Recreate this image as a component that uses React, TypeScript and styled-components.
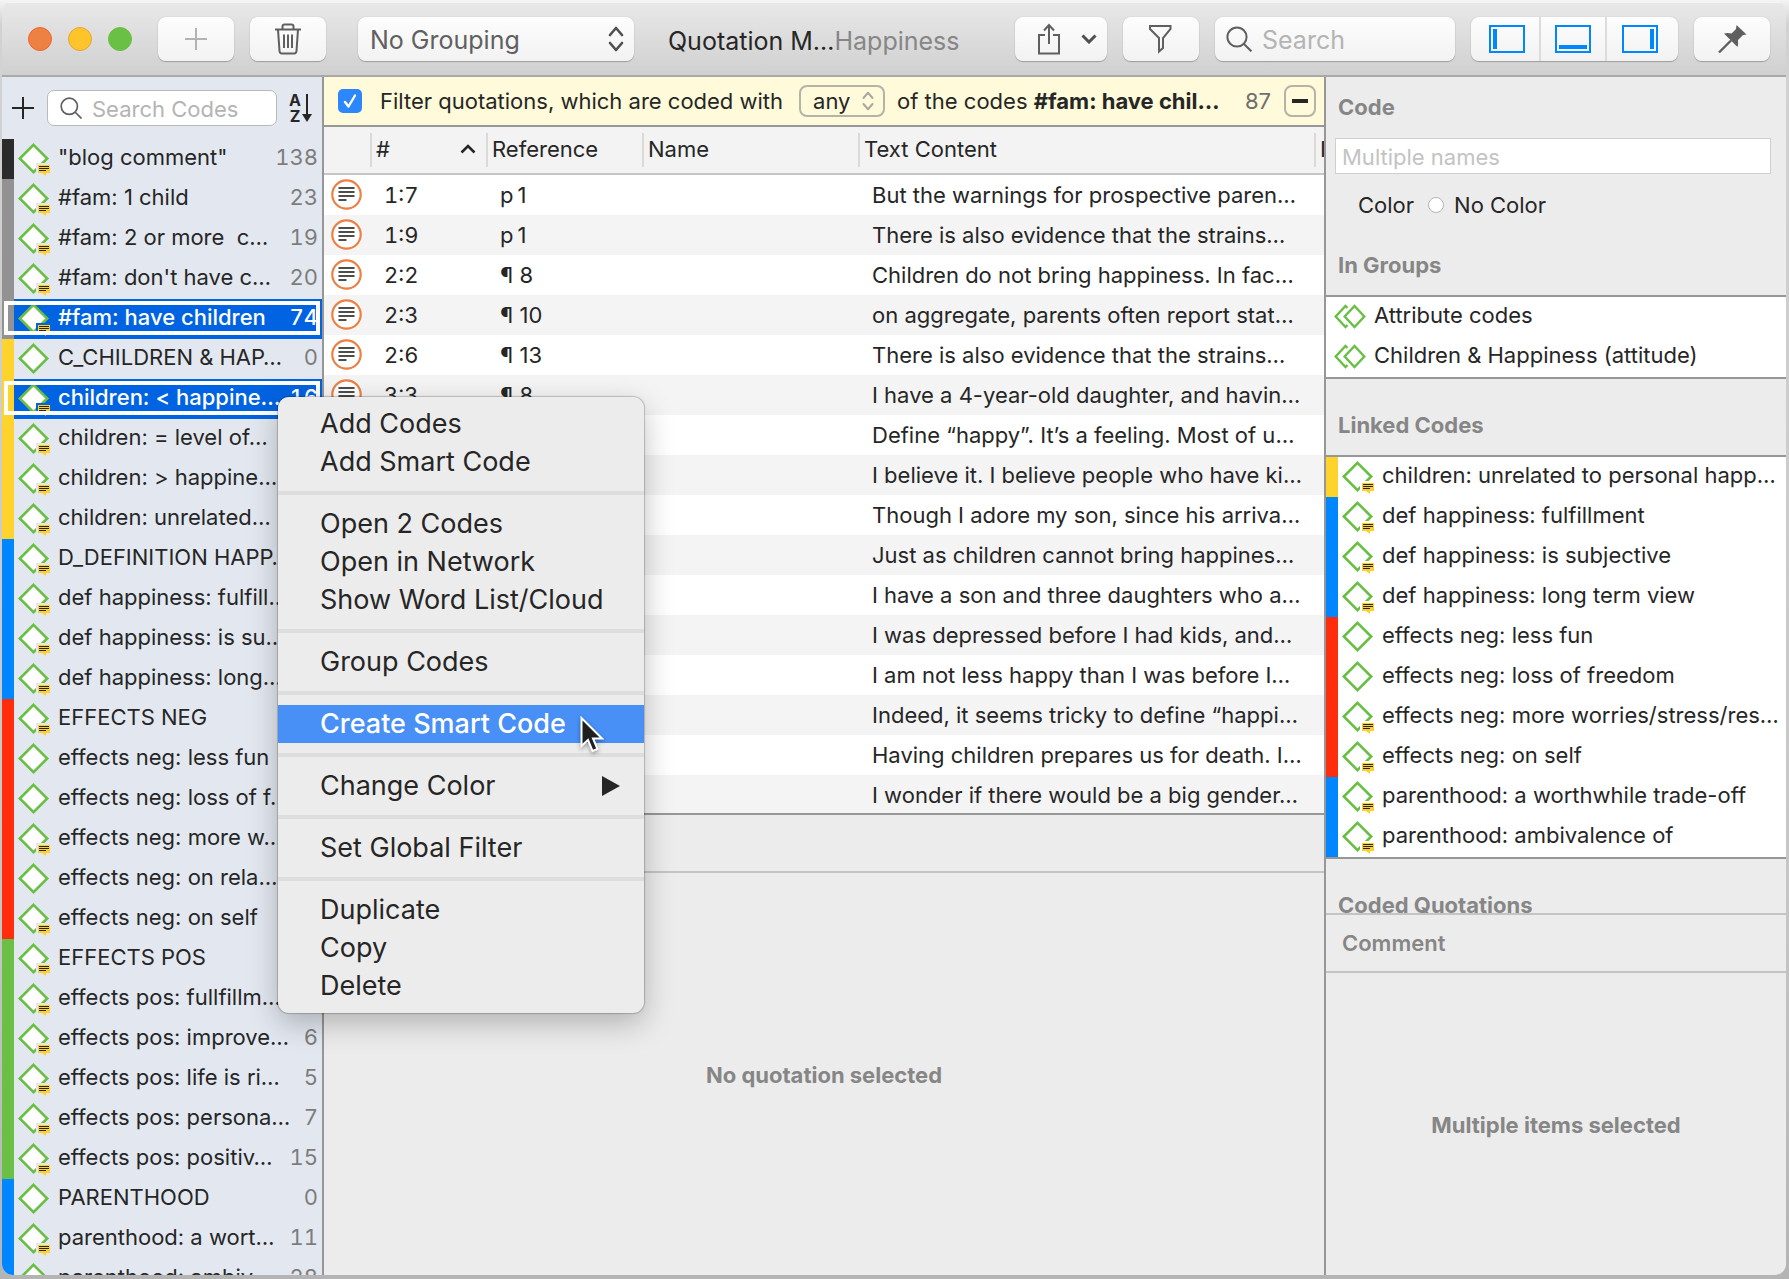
import React from "react";
import styled, { createGlobalStyle } from "styled-components";

const GlobalStyle = createGlobalStyle`
  *, *::before, *::after { box-sizing: border-box; }
  html, body, #root { height: 100%; }
  body {
    margin: 0;
    overflow: hidden;
    background: linear-gradient(#f4f4f4 0, #d2d2d2 24px, #c6c6c6 70%, #b4b4b4 100%);
    color: #262626;
    font: 22px/28px Inter, "Liberation Sans", sans-serif;
  }
  button, input, select { font: inherit; color: inherit; margin: 0; padding: 0; }
  ul { list-style: none; margin: 0; padding: 0; }
  h1, h2, p { margin: 0; font-size: inherit; }
  svg { display: block; flex: none; }
`;

const Page = styled.div`
  height: 100vh;
  padding: 1px 3px 4px 2px;
`;

const Window = styled.main`
  height: 100%;
  display: grid;
  grid-template-rows: 76px minmax(0, 1fr);
  border-radius: 11px;
  overflow: hidden;
  background: #ececec;
`;

/* ---------- toolbar ---------- */

const Toolbar = styled.header`
  display: flex;
  align-items: center;
  padding: 0 16px 0 26px;
  background: linear-gradient(#e8e8e8, #d0d0d0);
  border-top: 2px solid #f4f4f4;
  border-bottom: 2px solid #a9a9a9;
`;

const Lights = styled.div`
  display: flex;
  gap: 16px;
  margin-right: 26px;
`;

const Light = styled.button<{ $fill: string; $edge: string }>`
  width: 24px;
  height: 24px;
  border-radius: 50%;
  background: ${(p) => p.$fill};
  border: 1px solid ${(p) => p.$edge};
`;

const face = `
  height: 44px;
  border: 0;
  border-radius: 8px;
  background: linear-gradient(#fdfdfd, #f2f2f2);
  box-shadow: 0 1px 1px #9d9d9d, 0 0 1px #a9a9a9;
`;

const ToolButton = styled.button<{ $before?: number; $muted?: boolean }>`
  ${face}
  flex: none;
  width: 76px;
  margin-left: ${(p) => p.$before ?? 16}px;
  display: flex;
  align-items: center;
  justify-content: center;
  color: ${(p) => (p.$muted ? "#b3b3b3" : "#5f5f5f")};
`;

const ShareButton = styled(ToolButton)`
  width: 92px;
  padding: 0 10px 0 22px;
  justify-content: space-between;
`;

const SelectWrap = styled.span`
  display: grid;
  align-items: center;
  > * { grid-area: 1 / 1; }
  > svg { justify-self: end; pointer-events: none; }
`;

const GroupingWrap = styled(SelectWrap)`
  flex: none;
  width: 276px;
  margin-left: 32px;
  > svg { margin-right: 10px; }
`;

const GroupingSelect = styled.select`
  ${face}
  appearance: none;
  width: 100%;
  padding: 2px 40px 0 12px;
  font-size: 25px;
  line-height: 36px;
  color: #606060;
`;

const Title = styled.h1`
  flex: 1;
  min-width: 0;
  padding: 3px 0 0 34px;
  font-size: 25px;
  line-height: 32px;
  font-weight: 400;
  white-space: nowrap;
  span { color: #868686; }
`;

const SearchBox = styled.label`
  ${face}
  flex: none;
  width: 240px;
  margin-left: 16px;
  padding: 0 12px 0 11px;
  display: flex;
  align-items: center;
  gap: 10px;
  font-size: 25px;
  color: #5f5f5f;
`;

const BareInput = styled.input`
  flex: 1;
  min-width: 0;
  padding-top: 2px;
  border: 0;
  outline: 0;
  background: none;
  &::placeholder { color: #b4b4b4; opacity: 1; }
`;

const Segmented = styled.div`
  ${face}
  flex: none;
  margin-left: 16px;
  display: flex;
`;

const Segment = styled.button`
  padding: 0 14px;
  border: 0;
  background: none;
  display: flex;
  align-items: center;
  color: #0086ff;
  & + & { border-left: 2px solid #dcdcdc; }
  &:first-child { padding-left: 18px; }
  &:last-child { padding: 0 20px 0 15px; }
`;

/* ---------- three panes ---------- */

const Panes = styled.div`
  display: grid;
  grid-template-columns: 322px minmax(0, 1fr) 462px;
  min-height: 0;
`;

const Sidebar = styled.aside`
  min-height: 0;
  overflow: hidden;
  background: #e3e8f0;
  border-right: 2px solid #979797;
`;

const SidebarTools = styled.div`
  height: 62px;
  display: flex;
  align-items: center;
  padding: 0 10px;
`;

const PlainButton = styled.button`
  border: 0;
  background: none;
  display: flex;
  align-items: center;
`;

const CodeSearch = styled.label`
  flex: 1;
  min-width: 0;
  height: 36px;
  margin: 0 11px 0 13px;
  padding: 0 10px 0 12px;
  display: flex;
  align-items: center;
  gap: 10px;
  background: #fff;
  border: 1px solid #b9b9b9;
  border-radius: 7px;
  color: #5f5f5f;
`;

const SortLetters = styled.span`
  display: grid;
  width: 14px;
  font-size: 16px;
  font-weight: 700;
  line-height: 16px;
`;

const CodeRow = styled.li<{ $bar: string; $selected?: boolean }>`
  position: relative;
  height: 40px;
  display: flex;
  align-items: flex-start;
  padding: 3px 4px 0 3px;
  border-left: 12px solid ${(p) => p.$bar};
  white-space: pre;
  line-height: 30px;
  ${(p) =>
    p.$selected &&
    `
    background: #0063e1;
    color: #fff;
    font-weight: 500;
    &::after {
      content: "";
      position: absolute;
      inset: 2px 2px 4px -10px;
      border: 4px solid #fff;
    }
  `}
`;

const CodeName = styled.span`
  flex: 1;
  min-width: 0;
  padding-left: 7px;
  overflow: hidden;
`;

const Count = styled.span<{ $selected?: boolean }>`
  color: ${(p) => (p.$selected ? "#fff" : "#7d7d7d")};
  font-variant-numeric: tabular-nums;
`;

/* ---------- centre pane ---------- */

const Centre = styled.section`
  min-height: 0;
  display: flex;
  flex-direction: column;
`;

const FilterBar = styled.div`
  flex: none;
  height: 50px;
  display: flex;
  align-items: center;
  padding: 0 8px 0 14px;
  background: #fffad9;
  border-bottom: 2px solid #979797;
  white-space: nowrap;
`;

const FilterLabel = styled.label`
  display: flex;
  align-items: center;
  gap: 18px;
`;

const CheckWrap = styled.span`
  display: grid;
  place-items: center;
  > * { grid-area: 1 / 1; }
  > svg { pointer-events: none; }
`;

const Check = styled.input`
  appearance: none;
  width: 24px;
  height: 24px;
  border-radius: 5px;
  background: #2b87fb;
`;

const AnyWrap = styled(SelectWrap)`
  width: 86px;
  margin: 0 12px 0 16px;
  > svg { margin-right: 11px; }
`;

const AnySelect = styled.select`
  appearance: none;
  width: 100%;
  height: 32px;
  padding: 0 30px 0 12px;
  border: 2px solid #b3b3a8;
  border-radius: 8px;
  background: none;
`;

const FilterText = styled.span`
  flex: 1;
  min-width: 0;
`;

const FilterCount = styled.span`
  margin: 0 13px;
  color: #6e6e6e;
`;

const MinusButton = styled.button`
  width: 32px;
  height: 32px;
  border: 2px solid #b3b3a8;
  border-radius: 8px;
  background: none;
  display: grid;
  place-items: center;
`;

const TableWrap = styled.div`
  flex: none;
  height: 688px;
  overflow: hidden;
  background: #fff;
  border-bottom: 2px solid #979797;
`;

const Table = styled.table`
  width: 100%;
  table-layout: fixed;
  border-collapse: separate;
  border-spacing: 0;
  th, td { padding: 0; text-align: left; white-space: nowrap; overflow: hidden; }
  th { height: 48px; font-weight: 400; background: #f3f3f3; border-bottom: 2px solid #c6c6c6; }
  td { height: 40px; padding-left: 14px; }
  td:first-child { padding: 0 0 2px 7px; }
  td:nth-child(2) { font-variant-numeric: tabular-nums; }
  tbody tr:nth-child(even) { background: #f4f4f4; }
`;

const HeadCell = styled.div`
  height: 34px;
  display: flex;
  align-items: center;
  justify-content: space-between;
  padding: 0 10px 2px 4px;
  border-left: 2px solid #dadada;
`;

const PreviewTools = styled.div`
  flex: none;
  height: 58px;
  border-bottom: 2px solid #c4c4c4;
`;

const Empty = styled.p`
  flex: 1;
  display: grid;
  place-items: center;
  padding-top: 2px;
  color: #868686;
  font-weight: 700;
`;

/* ---------- inspector ---------- */

const Inspector = styled.aside`
  min-height: 0;
  display: flex;
  flex-direction: column;
  overflow: hidden;
  border-left: 2px solid #979797;
`;

const Heading = styled.h2<{ $height: number; $drop: number }>`
  flex: none;
  height: ${(p) => p.$height}px;
  padding: ${(p) => p.$drop}px 12px 0;
  overflow: hidden;
  font-weight: 700;
  line-height: 28px;
  color: #868686;
`;

const NameInput = styled.input`
  flex: none;
  height: 36px;
  margin: 0 15px 0 9px;
  padding: 2px 6px 0;
  background: #fff;
  border: 1px solid #cfcfcf;
  &::placeholder { color: #c3c3c3; opacity: 1; }
`;

const ColorRow = styled.div`
  flex: none;
  display: flex;
  align-items: center;
  height: 60px;
  padding: 2px 0 0 32px;
`;

const NoColor = styled.label`
  display: flex;
  align-items: center;
  gap: 10px;
  margin-left: 14px;
`;

const Radio = styled.input`
  appearance: none;
  width: 16px;
  height: 16px;
  border-radius: 50%;
  background: #fff;
  border: 1px solid #b5b5b5;
`;

const List = styled.ul`
  flex: none;
  background: #fff;
  border-top: 2px solid #979797;
  border-bottom: 2px solid #979797;
`;

const GroupRow = styled.li`
  height: 40px;
  padding: 3px 8px 0;
  display: flex;
  gap: 8px;
  line-height: 30px;
`;

const CommentHead = styled.h2`
  flex: none;
  height: 60px;
  padding: 14px 16px 0;
  border-top: 2px solid #c4c4c4;
  border-bottom: 2px solid #c4c4c4;
  font-weight: 600;
  color: #868686;
`;

/* ---------- context menu ---------- */

const Menu = styled.ul`
  position: absolute;
  left: 278px;
  top: 397px;
  width: 366px;
  padding: 8px 0;
  background: #ececec;
  border-radius: 11px;
  box-shadow: 0 0 1px 1px rgba(0, 0, 0, 0.2), 0 10px 30px rgba(0, 0, 0, 0.25);
  font-size: 27px;
`;

const MenuItem = styled.button<{ $active?: boolean }>`
  width: 100%;
  height: 38px;
  padding: 0 24px 0 42px;
  border: 0;
  display: flex;
  align-items: center;
  justify-content: space-between;
  text-align: left;
  background: ${(p) => (p.$active ? "#488ff6" : "none")};
  color: ${(p) => (p.$active ? "#fff" : "#262626")};
  font-weight: ${(p) => (p.$active ? 500 : 400)};
`;

const Separator = styled.li`
  height: 4px;
  margin: 10px 0;
  background: #dddde0;
`;

const Pointer = styled.svg`
  position: absolute;
  left: 580px;
  top: 716px;
  filter: drop-shadow(0 2px 2px rgba(0, 0, 0, 0.35));
`;

/* ---------- icons ---------- */

const Plus = () => (
  <svg width="22" height="22" viewBox="0 0 22 22" fill="none" stroke="currentColor" strokeWidth="2">
    <path d="M11 0V22M0 11H22" />
  </svg>
);

const Magnifier = ({ size }: { size: number }) => (
  <svg width={size} height={size} viewBox="0 0 26 26" fill="none" stroke="currentColor" strokeWidth="2">
    <circle cx="11" cy="11" r="9.6" />
    <path d="M18 18L25.4 25.4" />
  </svg>
);

const UpDown = ({ w, h, stroke }: { w: number; h: number; stroke: string }) => (
  <svg width={w} height={h} viewBox="0 0 16 26" fill="none" stroke={stroke} strokeWidth="2.6" strokeLinecap="round" strokeLinejoin="round">
    <path d="M2 9L8 2L14 9M2 17L8 24L14 17" />
  </svg>
);

const Trash = () => (
  <svg width="28" height="32" viewBox="0 0 28 32" fill="none" stroke="currentColor" strokeWidth="2">
    <path d="M1 6.500H27M8.500 6V3.500Q8.500 1.500 10.500 1.500H17.500Q19.500 1.500 19.500 3.500V6M4 6.500L5.500 28Q5.700 30.500 8 30.500H20Q22.300 30.500 22.500 28L24 6.500M10 11.500V25M14 11.500V25M18 11.500V25" />
  </svg>
);

const Diamond = ({ note, halo }: { note?: boolean; halo: string }) => (
  <svg width="34" height="35" viewBox="0 0 34 35">
    <path d="M16.500 2.800L30.200 16.500L16.500 30.200L2.800 16.500Z" fill="#fff" stroke="#69bf44" strokeWidth="2.6" />
    {note && (
      <>
        <path d="M19 21H34V35H19Z" fill={halo} />
        <path d="M21 23H33V31H29V34L25 31H21Z" fill="#fdd02b" />
        <path d="M22 24.500H32M22 26.500H32M22 28.500H29" stroke="#262626" strokeWidth="1" />
      </>
    )}
  </svg>
);

const GroupIcon = () => (
  <svg width="32" height="34" viewBox="0 0 32 34" fill="none" stroke="#69bf44" strokeWidth="2.4">
    <path d="M13.500 8L11.500 6L1.700 16.500L11.500 27L13.500 25" />
    <path d="M20.500 6L30.300 16.500L20.500 27L10.700 16.500Z" />
  </svg>
);

const QuoteIcon = () => (
  <svg width="31" height="31" viewBox="0 0 31 31" fill="none">
    <circle cx="15.500" cy="15.500" r="14.200" stroke="#ed8043" strokeWidth="2.2" fill="#fff" />
    <path d="M7.500 9H23.500M7.500 13H23.500M7.500 17H23.500M7.500 21H15.500" stroke="#4d4d4d" strokeWidth="2" />
  </svg>
);

const PaneIcon = ({ side }: { side: "left" | "bottom" | "right" }) => (
  <svg width="36" height="28" viewBox="0 0 36 28">
    <rect x="1" y="1" width="34" height="26" fill="none" stroke="currentColor" strokeWidth="2" />
    {side === "left" && <rect x="4" y="4" width="4" height="20" fill="currentColor" />}
    {side === "bottom" && <rect x="4" y="20" width="28" height="4" fill="currentColor" />}
    {side === "right" && <rect x="28" y="4" width="4" height="20" fill="currentColor" />}
  </svg>
);

/* ---------- data ---------- */

const BLACK = "#2b2b2b";
const GRAY = "#929292";
const YELLOW = "#fed32b";
const BLUE = "#0086ff";
const RED = "#ff2d0c";
const GREEN = "#69c044";

type Code = { name: string; bar: string; count?: number; note?: boolean; selected?: boolean };

const codes: Code[] = [
  { name: '"blog comment"', bar: BLACK, count: 138, note: true },
  { name: "#fam: 1 child", bar: GRAY, count: 23, note: true },
  { name: "#fam: 2 or more  c…", bar: GRAY, count: 19, note: true },
  { name: "#fam: don't have c…", bar: GRAY, count: 20, note: true },
  { name: "#fam: have children", bar: GRAY, count: 74, note: true, selected: true },
  { name: "C_CHILDREN & HAP…", bar: YELLOW, count: 0 },
  { name: "children: < happine…", bar: YELLOW, count: 16, note: true, selected: true },
  { name: "children: = level of…", bar: YELLOW, note: true },
  { name: "children: > happine…", bar: YELLOW, note: true },
  { name: "children: unrelated…", bar: YELLOW, note: true },
  { name: "D_DEFINITION HAPP…", bar: BLUE, note: true },
  { name: "def happiness: fulfill…", bar: BLUE, note: true },
  { name: "def happiness: is su…", bar: BLUE, note: true },
  { name: "def happiness: long…", bar: BLUE, note: true },
  { name: "EFFECTS NEG", bar: RED, note: true },
  { name: "effects neg: less fun", bar: RED },
  { name: "effects neg: loss of f…", bar: RED },
  { name: "effects neg: more w…", bar: RED, note: true },
  { name: "effects neg: on rela…", bar: RED },
  { name: "effects neg: on self", bar: RED, note: true },
  { name: "EFFECTS POS", bar: GREEN, note: true },
  { name: "effects pos: fullfillm…", bar: GREEN, note: true },
  { name: "effects pos: improve…", bar: GREEN, count: 6, note: true },
  { name: "effects pos: life is ri…", bar: GREEN, count: 5, note: true },
  { name: "effects pos: persona…", bar: GREEN, count: 7, note: true },
  { name: "effects pos: positiv…", bar: GREEN, count: 15, note: true },
  { name: "PARENTHOOD", bar: BLUE, count: 0 },
  { name: "parenthood: a wort…", bar: BLUE, count: 11, note: true },
  { name: "parenthood: ambiv…", bar: BLUE, count: 28, note: true },
];

const quotations: [string, string, string][] = [
  ["1:7", "p\u20091", "But the warnings for prospective paren…"],
  ["1:9", "p\u20091", "There is also evidence that the strains…"],
  ["2:2", "¶ 8", "Children do not bring happiness. In fac…"],
  ["2:3", "¶ 10", "on aggregate, parents often report stat…"],
  ["2:6", "¶ 13", "There is also evidence that the strains…"],
  ["3:3", "¶ 8", "I have a 4-year-old daughter, and havin…"],
  ["", "", "Define “happy”. It’s a feeling. Most of u…"],
  ["", "", "I believe it. I believe people who have ki…"],
  ["", "", "Though I adore my son, since his arriva…"],
  ["", "", "Just as children cannot bring happines…"],
  ["", "", "I have a son and three daughters who a…"],
  ["", "", "I was depressed before I had kids, and…"],
  ["", "", "I am not less happy than I was before I…"],
  ["", "", "Indeed, it seems tricky to define “happi…"],
  ["", "", "Having children prepares us for death. I…"],
  ["", "", "I wonder if there would be a big gender…"],
];

const linked: Code[] = [
  { name: "children: unrelated to personal happ…", bar: YELLOW, note: true },
  { name: "def happiness: fulfillment", bar: BLUE, note: true },
  { name: "def happiness: is subjective", bar: BLUE, note: true },
  { name: "def happiness: long term view", bar: BLUE, note: true },
  { name: "effects neg: less fun", bar: RED },
  { name: "effects neg: loss of freedom", bar: RED },
  { name: "effects neg: more worries/stress/res…", bar: RED, note: true },
  { name: "effects neg: on self", bar: RED, note: true },
  { name: "parenthood: a worthwhile trade-off", bar: BLUE, note: true },
  { name: "parenthood: ambivalence of", bar: BLUE, note: true },
];

const menuGroups: string[][] = [
  ["Add Codes", "Add Smart Code"],
  ["Open 2 Codes", "Open in Network", "Show Word List/Cloud"],
  ["Group Codes"],
  ["Create Smart Code"],
  ["Change Color"],
  ["Set Global Filter"],
  ["Duplicate", "Copy", "Delete"],
];

export default function App() {
  return (
    <Page>
      <GlobalStyle />
      <Window>
        <Toolbar>
          <Lights>
            <Light aria-label="Close" $fill="#ed8043" $edge="#f2662f" />
            <Light aria-label="Minimize" $fill="#fdc52b" $edge="#e8a33c" />
            <Light aria-label="Zoom" $fill="#69c044" $edge="#69c044" />
          </Lights>
          <ToolButton aria-label="Add" $before={0} $muted>
            <Plus />
          </ToolButton>
          <ToolButton aria-label="Delete">
            <Trash />
          </ToolButton>
          <GroupingWrap>
            <GroupingSelect aria-label="Grouping">
              <option>No Grouping</option>
            </GroupingSelect>
            <UpDown w={16} h={26} stroke="#4f4f4f" />
          </GroupingWrap>
          <Title>
            Quotation M…<span>Happiness</span>
          </Title>
          <ShareButton aria-label="Share">
            <svg width="24" height="32" viewBox="0 0 24 32" fill="none" stroke="currentColor" strokeWidth="2">
              <path d="M8 12H2V30.500H22V12H16M12 21V2M7 7.500L12 2L17 7.500" />
            </svg>
            <svg width="16" height="10" viewBox="0 0 16 10" fill="none" stroke="#4f4f4f" strokeWidth="3">
              <path d="M1.500 1.500L8 8L14.500 1.500" />
            </svg>
          </ShareButton>
          <ToolButton aria-label="Filter">
            <svg width="24" height="30" viewBox="0 0 24 30" fill="none" stroke="currentColor" strokeWidth="2">
              <path d="M1 2H21.500V5L14 14V24L10 27.500V14L1 5Z" />
            </svg>
          </ToolButton>
          <SearchBox>
            <Magnifier size={26} />
            <BareInput placeholder="Search" aria-label="Search" />
          </SearchBox>
          <Segmented>
            <Segment aria-label="Left pane"><PaneIcon side="left" /></Segment>
            <Segment aria-label="Bottom pane"><PaneIcon side="bottom" /></Segment>
            <Segment aria-label="Right pane"><PaneIcon side="right" /></Segment>
          </Segmented>
          <ToolButton aria-label="Pin">
            <svg width="29" height="29" viewBox="0 0 29 29">
              <path d="M18.500 0L28.500 9.500L25 10L20 15Q20.500 19 19.500 22L6 8.500Q9.500 7.500 13.500 8.500L18 4Z" fill="currentColor" />
              <path d="M13 15.500L1 27.500" stroke="currentColor" strokeWidth="2.4" />
            </svg>
          </ToolButton>
        </Toolbar>

        <Panes>
          <Sidebar>
            <SidebarTools>
              <PlainButton aria-label="Add code"><Plus /></PlainButton>
              <CodeSearch>
                <Magnifier size={22} />
                <BareInput placeholder="Search Codes" aria-label="Search Codes" />
              </CodeSearch>
              <PlainButton aria-label="Sort">
                <SortLetters>
                  <span>A</span>
                  <span>Z</span>
                </SortLetters>
                <svg width="10" height="28" viewBox="0 0 10 28">
                  <path d="M4 0H6V20H10L5 28L0 20H4Z" fill="currentColor" />
                </svg>
              </PlainButton>
            </SidebarTools>
            <ul>
              {codes.map((c) => (
                <CodeRow key={c.name} $bar={c.bar} $selected={c.selected}>
                  <Diamond note={c.note} halo={c.selected ? "#0063e1" : "#e3e8f0"} />
                  <CodeName>{c.name}</CodeName>
                  {c.count !== undefined && <Count $selected={c.selected}>{c.count}</Count>}
                </CodeRow>
              ))}
            </ul>
          </Sidebar>

          <Centre>
            <FilterBar>
              <FilterLabel>
                <CheckWrap>
                  <Check type="checkbox" defaultChecked />
                  <svg width="16" height="16" viewBox="0 0 16 16" fill="none" stroke="#fff" strokeWidth="2.4" strokeLinecap="round" strokeLinejoin="round">
                    <path d="M3 9L6.500 13.500L13 2.500" />
                  </svg>
                </CheckWrap>
                Filter quotations, which are coded with
              </FilterLabel>
              <AnyWrap>
                <AnySelect aria-label="Match">
                  <option>any</option>
                </AnySelect>
                <UpDown w={12} h={20} stroke="#a8a8a0" />
              </AnyWrap>
              <FilterText>
                of the codes <b>#fam: have chil…</b>
              </FilterText>
              <FilterCount>87</FilterCount>
              <MinusButton aria-label="Remove filter">
                <svg width="16" height="4" viewBox="0 0 16 4"><rect width="16" height="4" fill="currentColor" /></svg>
              </MinusButton>
            </FilterBar>

            <TableWrap>
              <Table>
                <colgroup>
                  <col width={46} />
                  <col width={116} />
                  <col width={156} />
                  <col width={216} />
                  <col />
                  <col width={10} />
                </colgroup>
                <thead>
                  <tr>
                    <th aria-label="Type" />
                    <th>
                      <HeadCell>
                        #
                        <svg width="16" height="10" viewBox="0 0 16 10" fill="none" stroke="currentColor" strokeWidth="2.6">
                          <path d="M1.500 8.500L8 2L14.500 8.500" />
                        </svg>
                      </HeadCell>
                    </th>
                    <th><HeadCell>Reference</HeadCell></th>
                    <th><HeadCell>Name</HeadCell></th>
                    <th><HeadCell>Text Content</HeadCell></th>
                    <th><HeadCell>I</HeadCell></th>
                  </tr>
                </thead>
                <tbody>
                  {quotations.map(([id, ref, text]) => (
                    <tr key={id + text}>
                      <td><QuoteIcon /></td>
                      <td>{id}</td>
                      <td>{ref}</td>
                      <td />
                      <td>{text}</td>
                      <td />
                    </tr>
                  ))}
                </tbody>
              </Table>
            </TableWrap>
            <PreviewTools />
            <Empty>No quotation selected</Empty>
          </Centre>

          <Inspector>
            <Heading $height={61} $drop={16}>Code</Heading>
            <NameInput placeholder="Multiple names" aria-label="Names" />
            <ColorRow>
              Color
              <NoColor>
                <Radio type="radio" name="color" />
                No Color
              </NoColor>
            </ColorRow>
            <Heading $height={61} $drop={17}>In Groups</Heading>
            <List>
              <GroupRow><GroupIcon />Attribute codes</GroupRow>
              <GroupRow><GroupIcon />Children &amp; Happiness (attitude)</GroupRow>
            </List>
            <Heading $height={76} $drop={32}>Linked Codes</Heading>
            <List>
              {linked.map((c) => (
                <CodeRow key={c.name} $bar={c.bar}>
                  <Diamond note={c.note} halo="#fff" />
                  <CodeName>{c.name}</CodeName>
                </CodeRow>
              ))}
            </List>
            <Heading $height={54} $drop={32}>Coded Quotations</Heading>
            <CommentHead>Comment</CommentHead>
            <Empty>Multiple items selected</Empty>
          </Inspector>
        </Panes>
      </Window>

      <Menu>
        {menuGroups.map((group, i) => (
          <React.Fragment key={group[0]}>
            {i > 0 && <Separator role="separator" />}
            {group.map((label) => (
              <li key={label}>
                <MenuItem $active={label === "Create Smart Code"}>
                  {label}
                  {label === "Change Color" && (
                    <svg width="18" height="20" viewBox="0 0 18 20"><path d="M0 0L18 10L0 20Z" fill="currentColor" /></svg>
                  )}
                </MenuItem>
              </li>
            ))}
          </React.Fragment>
        ))}
      </Menu>
      <Pointer width="24" height="38" viewBox="0 0 24 38">
        <path d="M1.500 2V30L8 24L12.500 35L17.500 33L13 22.500H22Z" fill="#1f1f1f" stroke="#fff" strokeWidth="2" />
      </Pointer>
    </Page>
  );
}
